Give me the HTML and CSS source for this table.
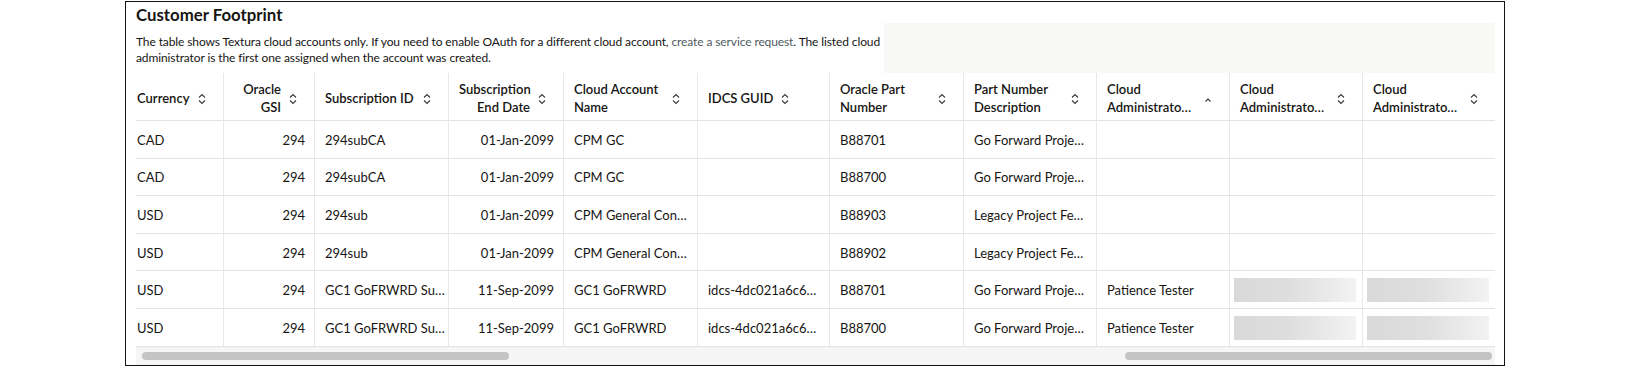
FILE: index.html
```html
<!DOCTYPE html>
<html lang="en">
<head>
  <meta charset="UTF-8">
  <meta name="viewport" content="width=device-width, initial-scale=1.0">
  <title>Customer Footprint</title>
  <link rel="stylesheet" href="styles.css">
</head>
<body>
  <section class="panel">
    <h2 class="panel-title">Customer Footprint</h2>

    <div class="intro">
      <p class="intro-text">The table shows Textura cloud accounts only. If you need to enable OAuth for a different cloud account, <a href="#">create a service request</a>. The listed cloud<br>administrator is the first one assigned when the account was created.</p>
      <div class="intro-fill"></div>
    </div>

    <div class="table-wrap">
      <table class="footprint">
        <colgroup>
          <col style="width: 87px">
          <col style="width: 91px">
          <col style="width: 134px">
          <col style="width: 115px">
          <col style="width: 134px">
          <col style="width: 132px">
          <col style="width: 134px">
          <col style="width: 133px">
          <col style="width: 133px">
          <col style="width: 133px">
          <col style="width: 133px">
        </colgroup>
        <thead>
          <tr>
            <th><div class="th"><span class="th-label">Currency</span><svg class="sort" viewBox="0 0 8 12"><path d="M1 4.5 4 1.5 7 4.5M1 7.5 4 10.5 7 7.5"/></svg></div></th>
            <th class="num"><div class="th"><span class="th-label">Oracle<br>GSI</span><svg class="sort" viewBox="0 0 8 12"><path d="M1 4.5 4 1.5 7 4.5M1 7.5 4 10.5 7 7.5"/></svg></div></th>
            <th><div class="th"><span class="th-label">Subscription ID</span><svg class="sort" viewBox="0 0 8 12"><path d="M1 4.5 4 1.5 7 4.5M1 7.5 4 10.5 7 7.5"/></svg></div></th>
            <th class="num"><div class="th"><span class="th-label">Subscription<br>End Date</span><svg class="sort" viewBox="0 0 8 12"><path d="M1 4.5 4 1.5 7 4.5M1 7.5 4 10.5 7 7.5"/></svg></div></th>
            <th><div class="th"><span class="th-label">Cloud Account<br>Name</span><svg class="sort" viewBox="0 0 8 12"><path d="M1 4.5 4 1.5 7 4.5M1 7.5 4 10.5 7 7.5"/></svg></div></th>
            <th><div class="th tight"><span class="th-label">IDCS GUID</span><svg class="sort" viewBox="0 0 8 12"><path d="M1 4.5 4 1.5 7 4.5M1 7.5 4 10.5 7 7.5"/></svg></div></th>
            <th><div class="th"><span class="th-label">Oracle Part<br>Number</span><svg class="sort" viewBox="0 0 8 12"><path d="M1 4.5 4 1.5 7 4.5M1 7.5 4 10.5 7 7.5"/></svg></div></th>
            <th><div class="th"><span class="th-label">Part Number<br>Description</span><svg class="sort" viewBox="0 0 8 12"><path d="M1 4.5 4 1.5 7 4.5M1 7.5 4 10.5 7 7.5"/></svg></div></th>
            <th><div class="th"><span class="th-label">Cloud<br>Administrato…</span><svg class="sort" viewBox="0 0 8 12"><path d="M1.5 8.5 4 6 6.5 8.5"/></svg></div></th>
            <th><div class="th"><span class="th-label">Cloud<br>Administrato…</span><svg class="sort" viewBox="0 0 8 12"><path d="M1 4.5 4 1.5 7 4.5M1 7.5 4 10.5 7 7.5"/></svg></div></th>
            <th><div class="th"><span class="th-label">Cloud<br>Administrato…</span><svg class="sort" viewBox="0 0 8 12"><path d="M1 4.5 4 1.5 7 4.5M1 7.5 4 10.5 7 7.5"/></svg></div></th>
          </tr>
        </thead>
        <tbody>
          <tr>
            <td>CAD</td><td class="num">294</td><td>294subCA</td><td class="num">01-Jan-2099</td><td>CPM GC</td><td></td><td>B88701</td><td>Go Forward Proje…</td><td></td><td></td><td></td>
          </tr>
          <tr>
            <td>CAD</td><td class="num">294</td><td>294subCA</td><td class="num">01-Jan-2099</td><td>CPM GC</td><td></td><td>B88700</td><td>Go Forward Proje…</td><td></td><td></td><td></td>
          </tr>
          <tr>
            <td>USD</td><td class="num">294</td><td>294sub</td><td class="num">01-Jan-2099</td><td>CPM General Con…</td><td></td><td>B88903</td><td>Legacy Project Fe…</td><td></td><td></td><td></td>
          </tr>
          <tr>
            <td>USD</td><td class="num">294</td><td>294sub</td><td class="num">01-Jan-2099</td><td>CPM General Con…</td><td></td><td>B88902</td><td>Legacy Project Fe…</td><td></td><td></td><td></td>
          </tr>
          <tr>
            <td>USD</td><td class="num">294</td><td>GC1 GoFRWRD Su…</td><td class="num">11-Sep-2099</td><td>GC1 GoFRWRD</td><td>idcs-4dc021a6c6…</td><td>B88701</td><td>Go Forward Proje…</td><td>Patience Tester</td><td><span class="blur"></span></td><td><span class="blur"></span></td>
          </tr>
          <tr>
            <td>USD</td><td class="num">294</td><td>GC1 GoFRWRD Su…</td><td class="num">11-Sep-2099</td><td>GC1 GoFRWRD</td><td>idcs-4dc021a6c6…</td><td>B88700</td><td>Go Forward Proje…</td><td>Patience Tester</td><td><span class="blur"></span></td><td><span class="blur"></span></td>
          </tr>
        </tbody>
      </table>

      <div class="scrollbar">
        <span class="thumb"></span>
        <span class="thumb"></span>
      </div>
    </div>
  </section>
</body>
</html>
```

FILE: styles.css
```css
/* Reset */
* {
  margin: 0;
  padding: 0;
  box-sizing: border-box;
}

body {
  font-family: 'Lato', 'Noto Sans', sans-serif;
  color: #161513;
  background-color: #fff;
}

/* Outer framed panel */
.panel {
  width: 1380px;
  margin: 1px 0 0 125px;
  padding: 0 9px 0 10px;
  border: 1px solid #111;
}

.panel-title {
  padding-top: 5px;
  font-size: 16.8px;
  line-height: 16px;
  font-weight: 700;
}

/* Description line + pale block on the right */
.intro {
  display: flex;
  height: 50px;
}

.intro-text {
  width: 748px;
  padding-top: 11px;
  font-size: 12px;
  line-height: 15.6px;
  letter-spacing: -0.11px;
  white-space: nowrap;
}

.intro-text a {
  color: #4f5a62;
  text-decoration: none;
}

.intro-fill {
  flex: 1;
  background-color: #f8f8f7;
}

/* Table */
.table-wrap {
  width: 1359px;
  overflow: hidden;
}

.footprint {
  width: 1359px;
  table-layout: fixed;
  border-collapse: separate;
  border-spacing: 0;
  font-size: 13px;
}

.footprint th,
.footprint td {
  border-bottom: 1px solid #e3e3e3;
  border-left: 1px solid #e8e8e8;
  white-space: nowrap;
  overflow: hidden;
  text-align: left;
  vertical-align: middle;
}

.footprint th:first-child,
.footprint td:first-child {
  border-left: none;
}

.footprint thead tr {
  height: 48px;
}

.footprint tbody tr {
  height: 37.6px;
}

.footprint th {
  padding: 2px 13px 0 10px;
  font-weight: 600;
  line-height: 18px;
}

.footprint td {
  padding: 1px 10px 0;
  font-weight: 400;
}

.footprint th:first-child,
.footprint td:first-child {
  padding-left: 1px;
}

.footprint td.num {
  text-align: right;
  padding-right: 9px;
}

/* Header cell: label and sort icon */
.th {
  display: flex;
  align-items: center;
}

.th-label {
  flex: 1;
  min-width: 0;
}

.th.tight .th-label {
  flex: none;
}

.num .th-label {
  text-align: right;
}

.sort {
  flex: none;
  width: 8px;
  height: 12px;
  margin: 2px 4px 0 8px;
  fill: none;
  stroke: #3a3937;
  stroke-width: 1.1;
}

/* Masked values */
.blur {
  display: block;
  height: 24px;
  margin: 0 -4px 0 -6px;
  background: linear-gradient(90deg, #d9d9d9 0%, #dedede 45%, #e9e9e9 75%, #f3f3f3 100%);
}

/* Horizontal scrollbar */
.scrollbar {
  display: flex;
  align-items: center;
  justify-content: space-between;
  height: 18px;
  padding: 0 3px 0 6px;
  background-color: #f5f5f5;
}

.thumb {
  width: 367px;
  height: 8px;
  border-radius: 4px;
  background-color: #c4c4c4;
}
```
